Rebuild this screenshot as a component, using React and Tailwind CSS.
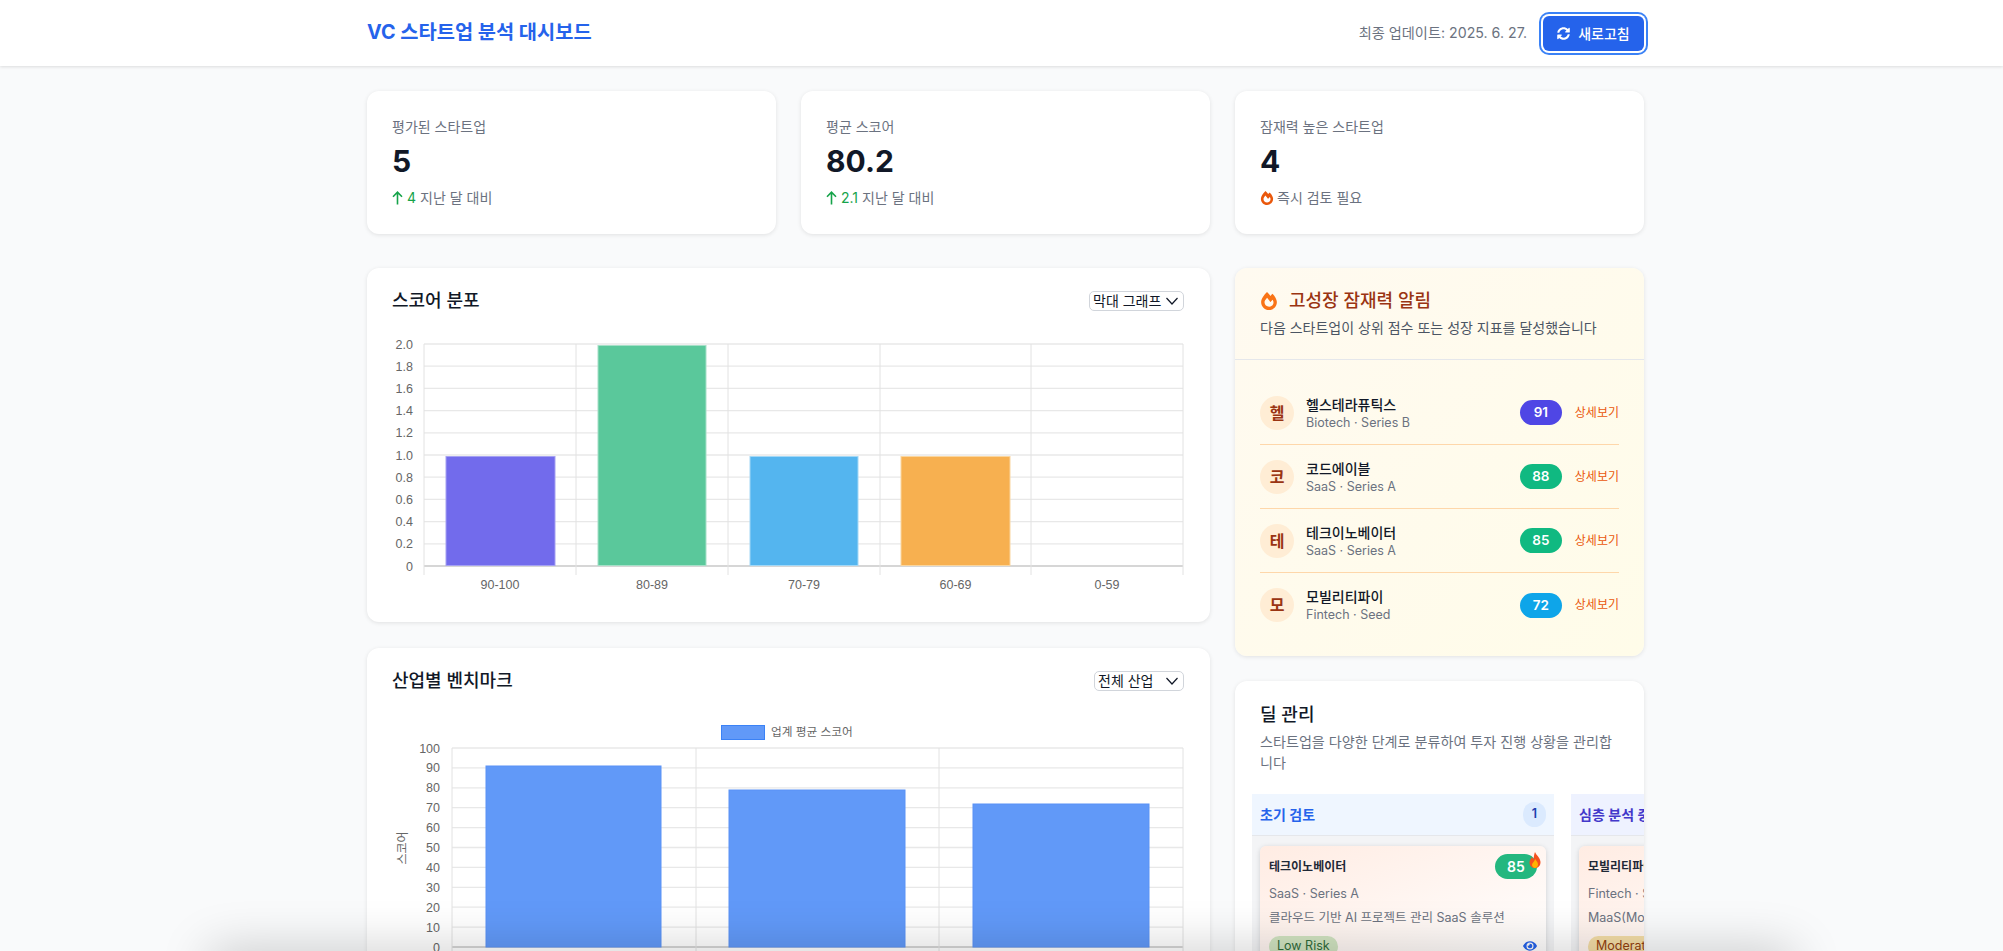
import React from "react";
import { FaSyncAlt, FaFireAlt, FaEye } from "react-icons/fa";

const fontStack = `Inter, "Noto Sans CJK KR", sans-serif`;
const chartFont = `"Liberation Sans", "Noto Sans CJK KR", sans-serif`;

const stats = [
  { label: "평가된 스타트업", value: "5", delta: "4", note: "지난 달 대비" },
  { label: "평균 스코어", value: "80.2", delta: "2.1", note: "지난 달 대비" },
  { label: "잠재력 높은 스타트업", value: "4", fire: true, note: "즉시 검토 필요" },
];

const alerts = [
  { ch: "헬", name: "헬스테라퓨틱스", sub: "Biotech · Series B", score: 91, color: "bg-[#4f46e5]" },
  { ch: "코", name: "코드에이블", sub: "SaaS · Series A", score: 88, color: "bg-[#10b981]" },
  { ch: "테", name: "테크이노베이터", sub: "SaaS · Series A", score: 85, color: "bg-[#10b981]" },
  { ch: "모", name: "모빌리티파이", sub: "Fintech · Seed", score: 72, color: "bg-[#0ea5e9]" },
];

const Chevron = () => (
  <svg width="14" height="10" viewBox="0 0 14 10" fill="none" stroke="#111827" strokeWidth="1.2">
    <path d="M1.5 2 L7 8 L12.5 2" />
  </svg>
);

const SelectBox = ({ label, className }) => (
  <div className={`flex h-[20px] items-center justify-between rounded-[5px] border border-[#d1d5db] bg-white pl-[3px] pr-[4px] text-[14px] leading-none text-[#111827] ${className}`}>
    <span>{label}</span>
    <Chevron />
  </div>
);

// score distribution chart
const DistributionChart = () => {
  const left = 57;
  const right = 816;
  const top = 8;
  const bottom = 230;
  const bars = [
    { x: 79, w: 109, v: 1, fill: "#726bec", stroke: "#a5a1f2" },
    { x: 231, w: 108, v: 2, fill: "#5ac89b", stroke: "#a6e0c8" },
    { x: 383, w: 108, v: 1, fill: "#54b5ef", stroke: "#a3d8f6" },
    { x: 534, w: 109, v: 1, fill: "#f7b050", stroke: "#fad69f" },
  ];
  const cols = [57, 209, 361, 513, 664, 816];
  const names = ["90-100", "80-89", "70-79", "60-69", "0-59"];
  const ticks = ["2.0", "1.8", "1.6", "1.4", "1.2", "1.0", "0.8", "0.6", "0.4", "0.2", "0"];
  return (
    <svg width="843" height="256" className="block" style={{ fontFamily: chartFont }}>
      {ticks.map((t, i) => {
        const y = top + (i * (bottom - top)) / 10;
        return (
          <g key={t}>
            <line x1={left} x2={right} y1={y} y2={y} stroke={i === 10 ? "#c9c9c9" : "#e8e8e8"} strokeWidth="1.3" />
            <text x={left - 11} y={y + 4.5} textAnchor="end" fontSize="12.5" fill="#666">{t}</text>
          </g>
        );
      })}
      {cols.map((x) => (
        <line key={x} x1={x} x2={x} y1={top} y2={bottom + 9} stroke="#e2e2e2" strokeWidth="1" />
      ))}
      {bars.map((b) => (
        <rect key={b.x} x={b.x} y={bottom - b.v * 111 + 1.5} width={b.w} height={b.v * 111 - 2} fill={b.fill} stroke={b.stroke} strokeWidth="1" />
      ))}
      {names.map((n, i) => (
        <text key={n} x={(cols[i] + cols[i + 1]) / 2} y={bottom + 23} textAnchor="middle" fontSize="12.5" fill="#666">{n}</text>
      ))}
    </svg>
  );
};

// benchmark chart, cut off by the bottom of the window
const BenchmarkChart = () => {
  const left = 85;
  const right = 816;
  const top = 30;
  const bottom = 229;
  const cols = [85, 329, 572, 816];
  const bars = [
    { x: 119, w: 175, h: 181 },
    { x: 362, w: 176, h: 157 },
    { x: 606, w: 176, h: 143 },
  ];
  const ticks = [100, 90, 80, 70, 60, 50, 40, 30, 20, 10, 0];
  return (
    <svg width="843" height="240" className="block" style={{ fontFamily: chartFont }}>
      <rect x="354.5" y="7.5" width="43" height="14" fill="#6199f8" stroke="#3b82f6" strokeWidth="1" />
      <text x="404" y="18" fontSize="11.7" fill="#666">업계 평균 스코어</text>
      <text transform="translate(40 130) rotate(-90)" textAnchor="middle" fontSize="12" fill="#666">스코어</text>
      {ticks.map((t, i) => {
        const y = top + (i * (bottom - top)) / 10;
        return (
          <g key={t}>
            <line x1={left} x2={right} y1={y} y2={y} stroke={t === 0 ? "#c9c9c9" : "#e8e8e8"} strokeWidth="1.3" />
            <text x={left - 12} y={y + 4.5} textAnchor="end" fontSize="12.5" fill="#666">{t}</text>
          </g>
        );
      })}
      {cols.map((x) => (
        <line key={x} x1={x} x2={x} y1={top} y2={bottom + 9} stroke="#e2e2e2" strokeWidth="1" />
      ))}
      {bars.map((b) => (
        <rect key={b.x} x={b.x} y={bottom - b.h} width={b.w} height={b.h} fill="#6199f8" stroke="#5a92f6" strokeWidth="1" />
      ))}
    </svg>
  );
};

const StatCard = ({ item }) => (
  <div className="h-[143px] rounded-[12px] bg-white pl-[25px] pt-[26px] shadow-[0_1px_4px_rgba(0,0,0,0.1)]">
    <div className="text-[14px] leading-[20px] text-[#6b7280]">{item.label}</div>
    <div className="mt-[5px] text-[30px] font-bold leading-[38px] text-[#111827]">{item.value}</div>
    <div className="mt-[8px] flex items-center text-[14px] leading-[20px] text-[#6b7280]">
      {item.fire ? (
        <FaFireAlt className="mr-[3px] text-[14px] text-[#ea580c]" />
      ) : (
        <>
          <svg width="11" height="14" viewBox="0 0 11 14" fill="none" stroke="#16a34a" strokeWidth="1.6" className="mr-[4px]">
            <path d="M5.5 13.5 V1.2 M1 5.8 L5.5 1.2 L10 5.8" />
          </svg>
          <span className="mr-[4px] text-[#16a34a]">{item.delta}</span>
        </>
      )}
      <span>{item.note}</span>
    </div>
  </div>
);

const DealCard = ({ name, score, scoreColor, meta, desc, risk, riskColor }) => (
  <div className="rounded-[6px] bg-gradient-to-br from-[#ffece3] to-white pl-[9px] pr-[9px] pt-[8px] shadow-[0_1px_5px_rgba(0,0,0,0.15)]">
    <div className="flex h-[25px] items-center justify-between">
      <span className="whitespace-nowrap text-[12px] font-semibold text-[#1f2937]">{name}</span>
      <span className={`relative flex h-[25px] w-[42px] shrink-0 items-center justify-center rounded-full text-[14px] font-semibold text-white ${scoreColor}`}>
        {score}
        <svg width="12" height="16" viewBox="0 0 12 16" className="absolute right-[-4px] top-[-2px]">
          <path d="M6 0 C7 3 11 5 11.5 10 C11.5 14 9 16 6 16 C3 16 0.5 14 0.5 10.5 C0.5 8 2 7 3 5 C3.5 6.5 4 7 4.5 7 C5 5 5 2 6 0 Z" fill="#f4511e" />
          <path d="M6.2 7 C7 9 9 10 9 12.5 C9 14.5 7.5 16 6 16 C4.5 16 3 14.5 3 12.8 C3 11 5.5 9.5 6.2 7 Z" fill="#ffb300" />
        </svg>
      </span>
    </div>
    <div className="mt-[5px] whitespace-nowrap text-[12.5px] leading-[20px] text-[#6b7280]">{meta}</div>
    <div className="mt-[4px] whitespace-nowrap text-[12.5px] leading-[20px] text-[#6b7280]">{desc}</div>
    <div className="mt-[8px] flex items-center justify-between">
      <span className={`whitespace-nowrap rounded-full px-[8px] py-[1px] text-[12.5px] ${riskColor}`}>{risk}</span>
      <FaEye className="shrink-0 text-[14px] text-[#2563eb]" />
    </div>
  </div>
);

export default function App() {
  return (
    <div className="relative h-[951px] overflow-hidden bg-[#f9fafb]" style={{ fontFamily: fontStack }}>
      <header className="h-[66px] bg-white shadow-[0_1px_3px_rgba(0,0,0,0.12)]">
        <div className="ml-[367px] flex h-full w-[1277px] items-center justify-between">
          <h1 className="text-[19.8px] font-bold text-[#2563eb]">VC 스타트업 분석 대시보드</h1>
          <div className="flex items-center">
            <span className="mr-[16px] text-[14.2px] text-[#6b7280]">최종 업데이트: 2025. 6. 27.</span>
            <button className="flex h-[35px] w-[101px] items-center justify-center rounded-[6px] bg-[#2563eb] text-[14px] font-medium text-white shadow-[0_0_0_2px_#fff,0_0_0_4px_#3b82f6]">
              <FaSyncAlt className="mr-[8px] text-[13px]" />
              새로고침
            </button>
          </div>
        </div>
      </header>

      <main className="ml-[367px] w-[1277px] pt-[25px]">
        <div className="grid grid-cols-3 gap-[25px]">
          {stats.map((s) => (
            <StatCard key={s.label} item={s} />
          ))}
        </div>

        <div className="mt-[34px] flex gap-[25px]">
          <div className="flex w-[843px] shrink-0 flex-col gap-[26px]">
            <section className="h-[354px] rounded-[12px] bg-white shadow-[0_1px_4px_rgba(0,0,0,0.1)]">
              <div className="flex items-center justify-between pl-[25px] pr-[26px] pt-[23px]">
                <h2 className="text-[18px] font-medium leading-[20px] text-[#111827]">스코어 분포</h2>
                <SelectBox label="막대 그래프" className="w-[95px]" />
              </div>
              <div className="mt-[25px]">
                <DistributionChart />
              </div>
            </section>
            <section className="h-[354px] rounded-[12px] bg-white shadow-[0_1px_4px_rgba(0,0,0,0.1)]">
              <div className="flex items-center justify-between pl-[25px] pr-[26px] pt-[23px]">
                <h2 className="text-[18px] font-medium leading-[20px] text-[#111827]">산업별 벤치마크</h2>
                <SelectBox label="전체 산업" className="w-[90px]" />
              </div>
              <div className="mt-[27px]">
                <BenchmarkChart />
              </div>
            </section>
          </div>

          <div className="flex min-w-0 flex-1 flex-col gap-[25px]">
            <section className="h-[388px] rounded-[12px] bg-gradient-to-br from-[#fffaf0] to-[#fffce9] shadow-[0_1px_4px_rgba(0,0,0,0.1)]">
              <div className="h-[92px] border-b border-[#e5e7eb] px-[25px] pt-[21px]">
                <div className="flex items-center">
                  <FaFireAlt className="mr-[11px] text-[18px] text-[#f97316]" />
                  <h2 className="text-[18px] font-medium leading-[24px] text-[#9a3412]">고성장 잠재력 알림</h2>
                </div>
                <p className="mt-[5px] text-[14px] leading-[20px] text-[#4b5563]">다음 스타트업이 상위 점수 또는 성장 지표를 달성했습니다</p>
              </div>
              <div className="px-[25px] pt-[21px]">
                {alerts.map((a, i) => (
                  <div key={a.ch} className={`flex h-[64px] items-center ${i < 3 ? "border-b border-[#fed7aa]" : ""}`}>
                    <span className="flex h-[34px] w-[34px] shrink-0 items-center justify-center rounded-full bg-[#ffedd5] text-[16px] font-semibold text-[#9a3412]">{a.ch}</span>
                    <div className="ml-[12px] flex-1">
                      <div className="text-[14px] font-medium leading-[20px] text-[#111827]">{a.name}</div>
                      <div className="text-[12.5px] leading-[16px] text-[#6b7280]">{a.sub}</div>
                    </div>
                    <span className={`flex h-[25px] w-[42px] items-center justify-center rounded-full text-[13.5px] font-semibold text-white ${a.color}`}>{a.score}</span>
                    <span className="ml-[13px] text-[12px] text-[#ea580c]">상세보기</span>
                  </div>
                ))}
              </div>
            </section>

            <section className="h-[400px] overflow-hidden rounded-[12px] bg-white shadow-[0_1px_4px_rgba(0,0,0,0.1)]">
              <div className="px-[25px] pt-[22px]">
                <h2 className="text-[18px] font-medium leading-[24px] text-[#111827]">딜 관리</h2>
                <p className="mt-[4px] text-[14.1px] leading-[21px] text-[#6b7280]">스타트업을 다양한 단계로 분류하여 투자 진행 상황을 관리합니다</p>
              </div>
              <div className="mt-[21px] flex gap-[17px] pl-[17px]">
                <div className="w-[302px] shrink-0 bg-[#f3f4f6]">
                  <div className="flex h-[42px] items-center justify-between border-b border-[#e5e7eb] bg-[#eff6ff] pl-[8px] pr-[8px]">
                    <span className="text-[14px] font-semibold text-[#2563eb]">초기 검토</span>
                    <span className="flex h-[25px] w-[23px] items-center justify-center rounded-full bg-[#dbeafe] text-[12.5px] font-semibold text-[#1e40af]">1</span>
                  </div>
                  <div className="px-[8px] pt-[10px]">
                    <DealCard name="테크이노베이터" score="85" scoreColor="bg-[#24b77f]" meta="SaaS · Series A" desc="클라우드 기반 AI 프로젝트 관리 SaaS 솔루션" risk="Low Risk" riskColor="bg-[#d0e3c0] text-[#2f6b3a]" />
                  </div>
                </div>
                <div className="w-[302px] shrink-0 bg-[#f3f4f6]">
                  <div className="flex h-[42px] items-center justify-between border-b border-[#e5e7eb] bg-[#eef2ff] pl-[8px] pr-[8px]">
                    <span className="text-[14px] font-semibold text-[#4338ca]">심층 분석 중</span>
                  </div>
                  <div className="px-[8px] pt-[10px]">
                    <DealCard name="모빌리티파이" score="72" scoreColor="bg-[#0ea5e9]" meta="Fintech · Seed" desc="MaaS(Mobility as a Service) 플랫폼" risk="Moderate Risk" riskColor="bg-[#f3dca6] text-[#92400e]" />
                  </div>
                </div>
              </div>
            </section>
          </div>
        </div>
      </main>

      {/* soft shadow coming up from below the window's bottom edge */}
      <div className="pointer-events-none absolute left-[210px] right-[210px] top-[951px] h-[40px] shadow-[0_0_50px_rgba(0,0,0,0.22)]" />
    </div>
  );
}
